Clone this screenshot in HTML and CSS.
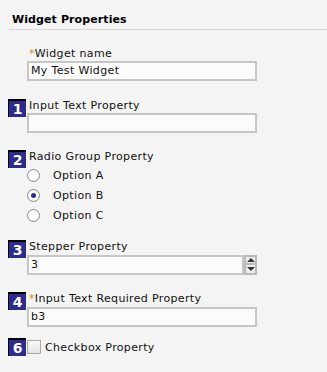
FILE: index.html
```html
<!DOCTYPE html>
<html lang="en">
<head>
    <meta charset="UTF-8">
    <title>Widget Properties</title>
    <link rel="stylesheet" href="styles.css">
</head>
<body>
    <div class="panel">
        <h2 class="panel-title">Widget Properties</h2>

        <div class="field field-name">
            <span class="badge blank"></span>
            <div class="field-body">
                <label class="label"><span class="req">*</span>Widget name</label>
                <div class="text-box">My Test Widget</div>
            </div>
        </div>

        <div class="field field-text">
            <span class="badge">1</span>
            <div class="field-body">
                <label class="label">Input Text Property</label>
                <div class="text-box"></div>
            </div>
        </div>

        <div class="field">
            <span class="badge">2</span>
            <div class="field-body">
                <label class="label tall">Radio Group Property</label>
                <div class="radio-row"><span class="radio"></span>Option A</div>
                <div class="radio-row"><span class="radio checked"></span>Option B</div>
                <div class="radio-row"><span class="radio"></span>Option C</div>
            </div>
        </div>

        <div class="field field-stepper">
            <span class="badge">3</span>
            <div class="field-body">
                <label class="label tall">Stepper Property</label>
                <div class="stepper">
                    <div class="text-box">3</div>
                    <div class="spin">
                        <span class="spin-btn up"></span>
                        <span class="spin-btn down"></span>
                    </div>
                </div>
            </div>
        </div>

        <div class="field field-required">
            <span class="badge">4</span>
            <div class="field-body">
                <label class="label tall"><span class="req">*</span>Input Text Required Property</label>
                <div class="text-box">b3</div>
            </div>
        </div>

        <div class="field field-check">
            <span class="badge">6</span>
            <div class="check-row"><span class="checkbox"></span>Checkbox Property</div>
        </div>
    </div>
</body>
</html>
```

FILE: styles.css
```css
* {
    box-sizing: border-box;
    margin: 0;
    padding: 0;
}

body {
    background: #f4f4f4;
    color: #111;
    font-family: "DejaVu Sans", Verdana, sans-serif;
    font-size: 11px;
    letter-spacing: 0.35px;
    width: 327px;
    height: 372px;
    overflow: hidden;
}

.panel-title {
    font-size: 11px;
    font-weight: bold;
    letter-spacing: 0.1px;
    color: #000;
    margin-left: 9px;
    padding: 13px 0 0 3px;
    height: 30px;
    border-bottom: 1px solid #d8d8d8;
}

.field {
    display: grid;
    grid-template-columns: 19px 230px;
    padding-left: 8px;
    margin-top: 17px;
}

.field-text {
    margin-top: 18px;
}

.field-stepper {
    margin-top: 15px;
}

.field-check {
    margin-top: 11px;
    align-items: start;
}

.badge {
    width: 18px;
    height: 18px;
    background: #2d2b8c;
    border-top: 2px solid #000;
    border-left: 1px solid #000;
    color: #fff;
    font-weight: bold;
    font-size: 14px;
    letter-spacing: 0;
    line-height: 16px;
    text-align: center;
}

.badge.blank {
    visibility: hidden;
}

.label {
    display: block;
    height: 14px;
    line-height: 14px;
    padding-left: 2px;
}

.label.tall {
    height: 15px;
}

.req {
    color: #c8920a;
}

.text-box {
    height: 20px;
    width: 230px;
    background: #fbfbfb;
    border: 2px solid #c6c6c6;
    padding-left: 2px;
    line-height: 16px;
}

.radio-row {
    display: flex;
    align-items: center;
    height: 20px;
}

.radio {
    width: 13px;
    height: 13px;
    border-radius: 50%;
    border: 1px solid #8a8a8a;
    background: radial-gradient(circle, #fff 55%, #e2e2e2 100%);
    margin-right: 13px;
    display: flex;
    align-items: center;
    justify-content: center;
}

.radio.checked::after {
    content: "";
    width: 5px;
    height: 5px;
    border-radius: 50%;
    background: #2d2b8c;
}

.stepper {
    display: flex;
}

.stepper .text-box {
    width: 217px;
}

.spin {
    display: flex;
    flex-direction: column;
    width: 13px;
}

.spin-btn {
    height: 10px;
    background: #ededed;
    border: 2px solid #b8b8b8;
    display: flex;
    align-items: center;
    justify-content: center;
}

.spin-btn.down {
    border-top: 0;
}

.spin-btn.up::after {
    content: "";
    border-left: 4px solid transparent;
    border-right: 4px solid transparent;
    border-bottom: 4px solid #333;
}

.spin-btn.down::after {
    content: "";
    border-left: 4px solid transparent;
    border-right: 4px solid transparent;
    border-top: 4px solid #333;
}

.check-row {
    display: flex;
    align-items: center;
    height: 18px;
}

.checkbox {
    width: 14px;
    height: 14px;
    border: 1px solid #a8a8a8;
    background: linear-gradient(#f8f8f8, #e4e4e4);
    margin-right: 4px;
}
```
